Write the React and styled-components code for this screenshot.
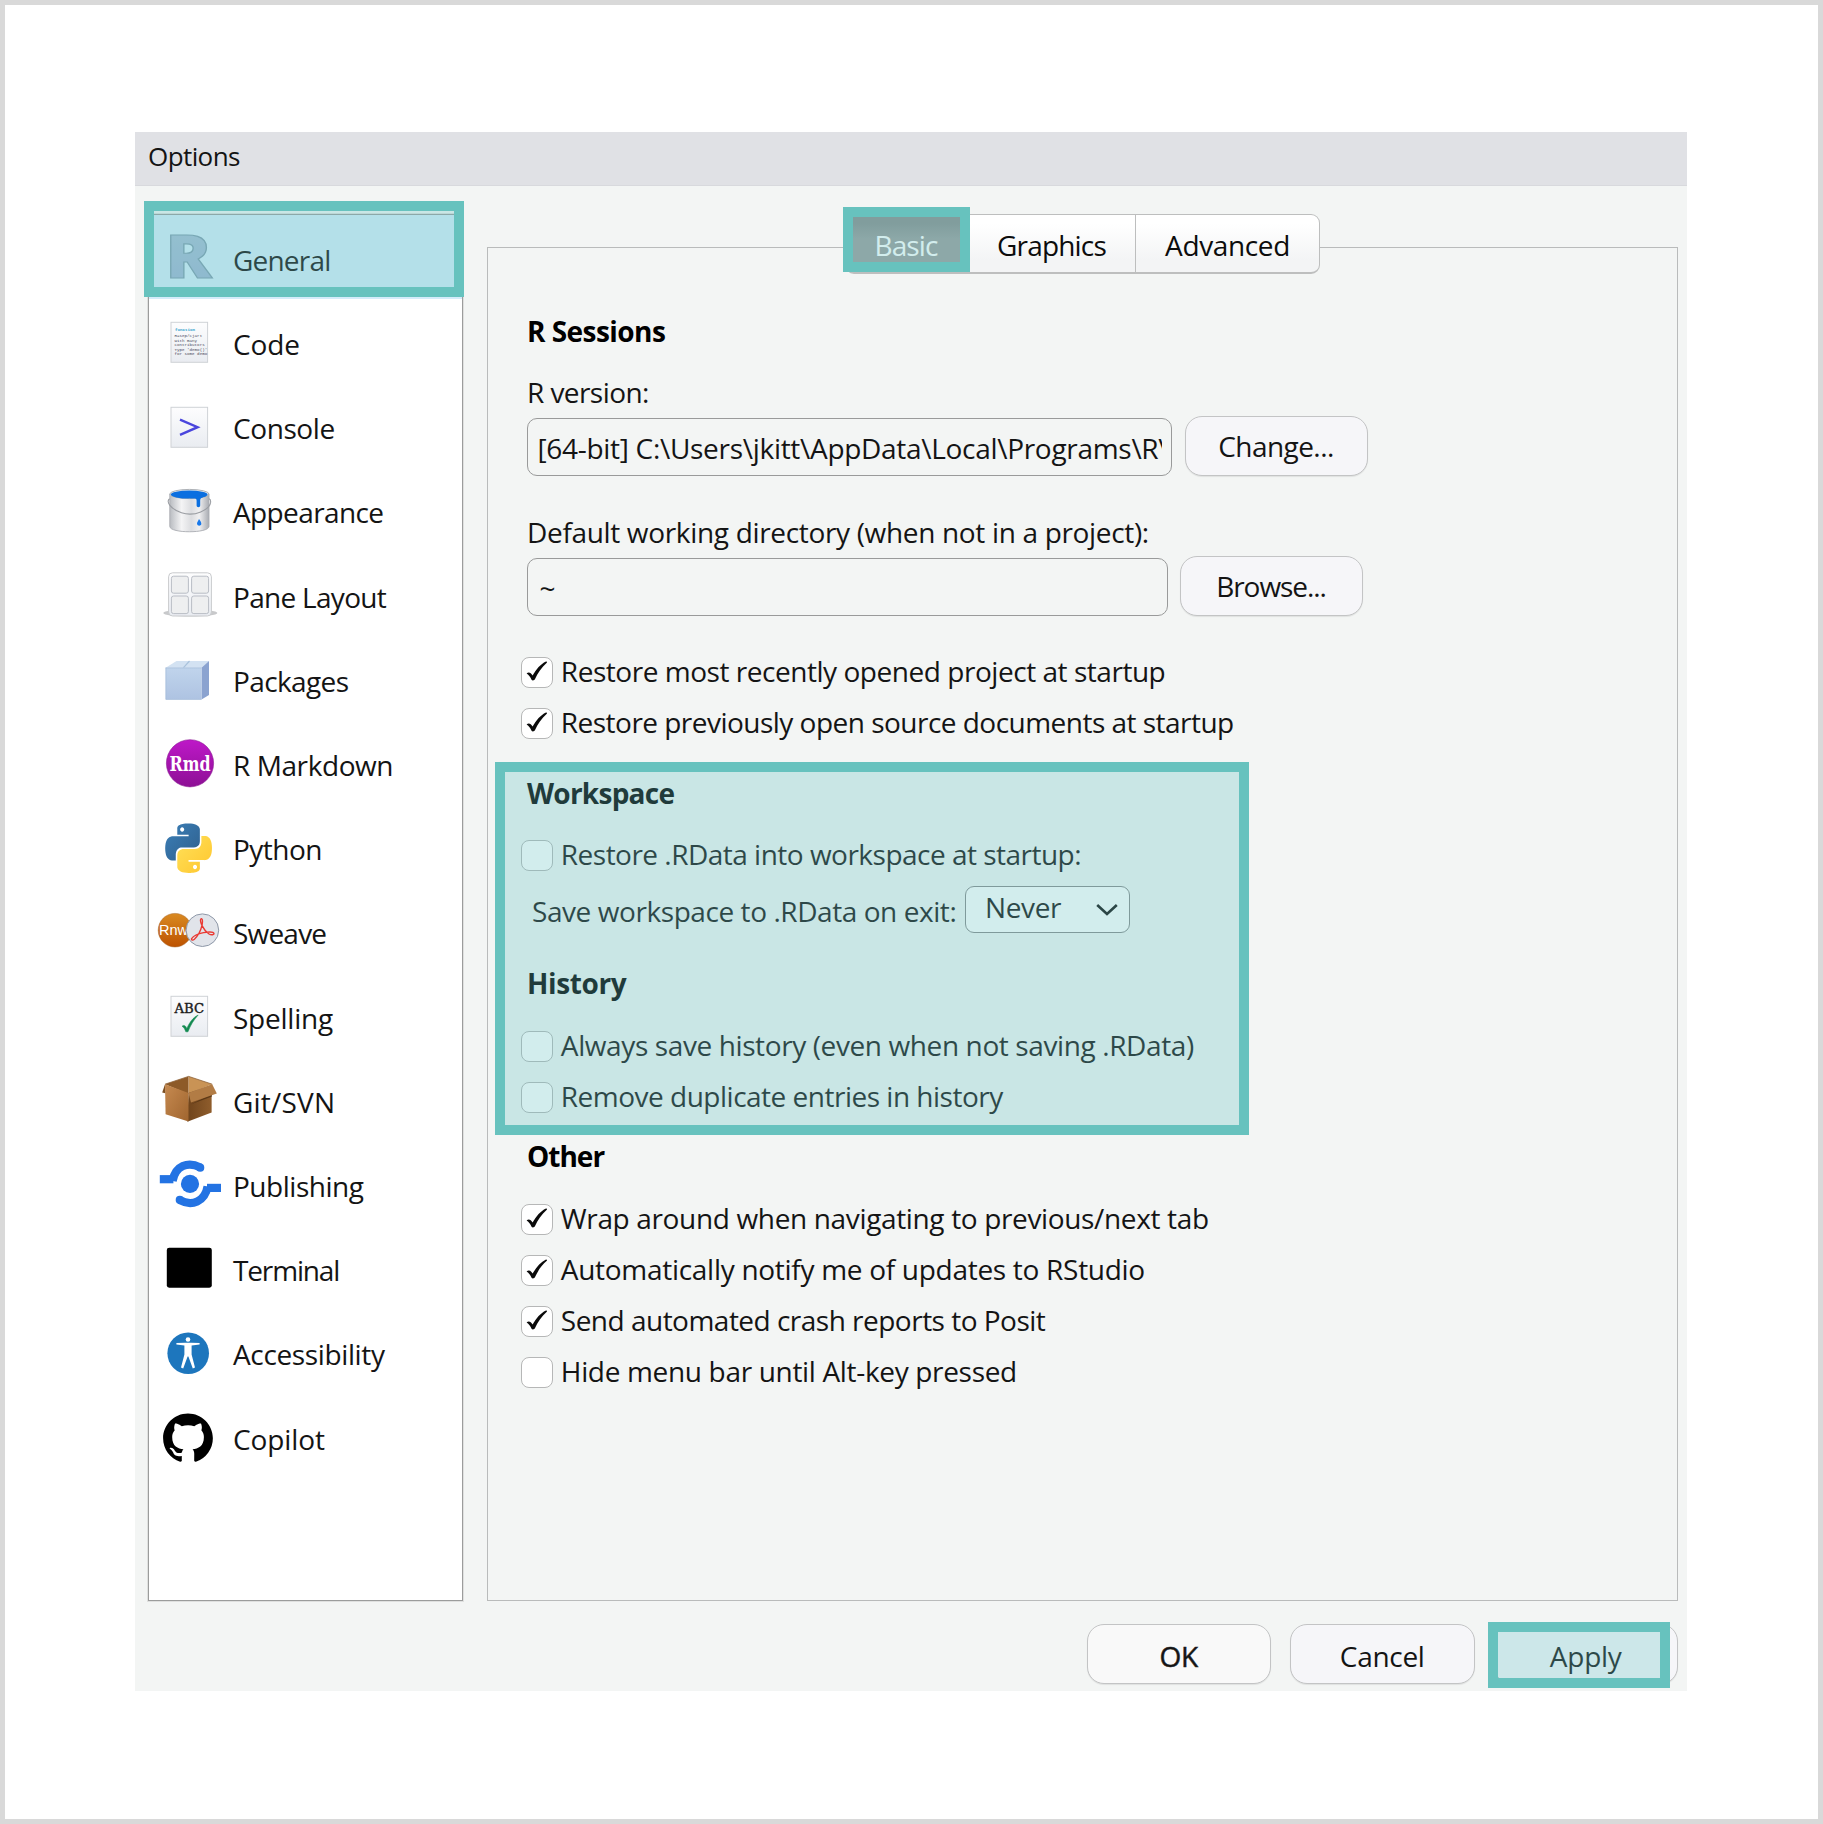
import React from "react";
import styled, { createGlobalStyle, css } from "styled-components";

const GlobalStyle = createGlobalStyle`
  *, *::before, *::after { box-sizing: border-box; }
  body { margin: 0; background: #fff; }
`;

const Page = styled.div`
  width: 1823px;
  height: 1824px;
  padding: 127px 131px 0 130px;
  border: 5px solid #d9d9d9;
  background: #fff;
  color: #141414;
  font: 400 28px/38px "Open Sans", "Noto Sans", sans-serif;
  overflow: hidden;
  white-space: pre;
`;

const Dialog = styled.section`
  position: relative;
  width: 1552px;
  height: 1559px;
  background: #f3f5f4;
`;

const TitleBar = styled.header`
  height: 54px;
  padding: 6px 13px;
  border-bottom: 1px solid #d8d9dd;
  background: #e0e1e5;
  font-size: 26px;
  line-height: 36px;
  letter-spacing: -0.59px;
`;

const Body = styled.div`
  display: flex;
  gap: 24px;
  height: 1416px;
  padding: 28px 9px 0 13px;
`;

const Sidebar = styled.nav`
  flex: 0 0 315px;
  height: 1387px;
  border: 1px solid #9b9c9c;
  border-right-width: 1.5px;
  background: #fff;
  outline: 1px solid rgba(120, 120, 120, 0.16);
`;

const NavItem = styled.div`
  display: flex;
  height: 84.19px;
  padding: 11.2px 0 0 8px;
  background: ${(p) => (p.$selected ? "#d4ecfa" : "transparent")};
  svg {
    flex: 0 0 64px;
    width: 64px;
    height: 64px;
    overflow: visible;
  }
`;

const NavLabel = styled.span`
  margin: 14.7px 0 0 12px;
  letter-spacing: ${(p) => p.$track}px;
`;

const Main = styled.main`
  flex: 1;
  display: flex;
  flex-direction: column;
`;

const TabBar = styled.div`
  z-index: 1;
  align-self: center;
  display: flex;
  height: 60px;
  border: 1px solid #bdbebe;
  border-bottom-width: 2px;
  border-radius: 9px;
  background: linear-gradient(#fff 15%, #f3f4f5 80%);
  overflow: hidden;
`;

const Tab = styled.button`
  width: ${(p) => p.$width}px;
  padding: 2px ${(p) => p.$shift || 0}px 0 0;
  border: 0;
  border-left: ${(p) => (p.$active ? "0" : "1px solid #bdbebe")};
  background: ${(p) => (p.$active ? "linear-gradient(#8b8d8d 8px, #9c9d9d 24px)" : "transparent")};
  color: ${(p) => (p.$active ? "#fff" : "#0c0c0c")};
  font: inherit;
  letter-spacing: ${(p) => p.$track}px;
`;

const Panel = styled.div`
  height: 1354px;
  margin-top: -27px;
  padding: 63px 0 0 34px;
  border: 1px solid #b9bbbb;
`;

const Group = styled.section`
  margin-top: ${(p) => p.$top || 0}px;
`;

const Heading = styled.h2`
  height: 38px;
  margin: 0 0 ${(p) => p.$gap}px 5px;
  color: #000;
  font-size: 28px;
  font-weight: 700;
  line-height: 40px;
  letter-spacing: ${(p) => p.$track}px;
`;

const FieldLabel = styled.label`
  display: block;
  margin: ${(p) => p.$top || 0}px 0 0 5px;
  letter-spacing: ${(p) => p.$track}px;
`;

const FieldRow = styled.div`
  display: flex;
  align-items: flex-end;
  gap: ${(p) => p.$gap}px;
  height: 60px;
  margin: ${(p) => p.$top}px 0 0 4.5px;
`;

const Field = styled.div`
  width: ${(p) => p.$width}px;
  height: 58px;
  padding: 10px 9px 8px ${(p) => p.$inset || 10}px;
  border: 1.5px solid #999a9a;
  border-radius: 10px;
  letter-spacing: ${(p) => p.$track || 0}px;
`;

const FieldValue = styled.div`
  overflow: hidden;
`;

const Button = styled.button`
  width: ${(p) => p.$width}px;
  height: 60px;
  padding: ${(p) => (p.$footer ? "3px 0 0" : "0 0 1px")};
  border: 1.5px solid #c3c4c5;
  border-radius: 17px;
  background: ${(p) => (p.$primary ? "#f9f9f9" : "#f6f6f9")};
  box-shadow: 0 1px 1px rgba(0, 0, 0, 0.08);
  color: #141414;
  font: inherit;
  letter-spacing: ${(p) => p.$track}px;
  ${(p) => p.$primary && css`-webkit-text-stroke: 0.5px #222;`}
`;

const CheckRow = styled.label`
  display: flex;
  align-items: flex-start;
  gap: 7.5px;
  height: 38px;
  margin-left: -0.7px;
  letter-spacing: ${(p) => p.$track}px;
  & + & { margin-top: 13px; }
`;

const CheckBox = styled.span`
  flex: 0 0 32px;
  height: 31px;
  margin-top: 5px;
  border: 1.5px solid #b6b7b7;
  border-radius: 8px;
  background: #fff;
  svg { display: block; }
`;

const SaveRow = styled.div`
  display: flex;
  gap: 9px;
  height: 47px;
  margin: 13px 0 0 10px;
`;

const SaveLabel = styled.span`
  width: 424px;
  padding-top: 6px;
  letter-spacing: -0.43px;
`;

const Select = styled.div`
  display: flex;
  justify-content: space-between;
  width: 165px;
  height: 47px;
  padding: 1px 11px 0 19px;
  border: 1.5px solid #88898a;
  border-radius: 9px;
  background: #fff;
  letter-spacing: -0.38px;
  svg { margin-top: 15px; }
`;

const Footer = styled.footer`
  display: flex;
  justify-content: flex-end;
  gap: 19px;
  padding: 22px 9px 0 0;
`;

/* Teal marker box drawn over a part of the dialog. */
const Highlight = styled.div`
  position: absolute;
  left: ${(p) => p.$x}px;
  top: ${(p) => p.$y}px;
  width: ${(p) => p.$w}px;
  height: ${(p) => p.$h}px;
  z-index: 2;
  border: 10px solid #67c2be;
  background: rgba(105, 194, 194, 0.3);
  background-clip: padding-box;
  pointer-events: none;
`;

const Svg = ({ children }) => (
  <svg viewBox="0 0 64 64" fill="none">{children}</svg>
);

const Sheet = () => (
  <rect x="14" y="12.3" width="36.6" height="40" fill="url(#sheet)" stroke="#cfd2d6" />
);

const icons = {
  general: (
    <Svg>
      <defs>
        <linearGradient id="rFill" x1="0" y1="0" x2="0" y2="1">
          <stop offset="0" stopColor="#a9c2d6" />
          <stop offset="1" stopColor="#9db2d3" />
        </linearGradient>
        <linearGradient id="sheet" x1="0" y1="0" x2="0" y2="1">
          <stop offset="0" stopColor="#fdfdfe" />
          <stop offset="1" stopColor="#e9ecf1" />
        </linearGradient>
      </defs>
      <text x="8.6" y="52.4" fontFamily="Open Sans" fontWeight="800" fontSize="60.5" textLength="46" lengthAdjust="spacingAndGlyphs" fill="url(#rFill)" stroke="#7f9cae" strokeWidth="1.2">R</text>
    </Svg>
  ),
  code: (
    <Svg>
      <Sheet />
      <g fontFamily="Liberation Mono" fontSize="4.2" fill="#4a4a5c">
        <text x="18" y="20.6" fontWeight="700" fill="#2a9ccb">function</text>
        <text x="17.5" y="27.4">R=sep/cjart</text>
        <text x="17.5" y="31.9">with many</text>
        <text x="17.5" y="36.3">contributors</text>
        <text x="17.5" y="40.7">Type 'demo()'</text>
        <text x="17.5" y="45.1">for some demo</text>
      </g>
    </Svg>
  ),
  console: (
    <Svg>
      <Sheet />
      <path d="M23 24.6L40.6 32.2L23 39.8" stroke="#4a45dd" strokeWidth="2.4" />
    </Svg>
  ),
  appearance: (
    <Svg>
      <defs>
        <linearGradient id="can" x1="0" y1="0" x2="1" y2="0">
          <stop offset="0" stopColor="#b9bcc1" />
          <stop offset="0.3" stopColor="#f4f4f5" />
          <stop offset="0.55" stopColor="#dcdde0" />
          <stop offset="0.75" stopColor="#f0f0f1" />
          <stop offset="1" stopColor="#a9acb2" />
        </linearGradient>
      </defs>
      <path d="M12.8 15V47.5C13 54.5 51.6 54.5 52 47.5V15Z" fill="url(#can)" stroke="#aaadb2" strokeWidth="0.9" />
      <ellipse cx="32.4" cy="15" rx="19.6" ry="4.6" fill="#e8eaec" stroke="#a5a9af" strokeWidth="0.9" />
      <ellipse cx="32.2" cy="15.6" rx="18.4" ry="4" fill="#0b6fe0" />
      <path d="M36 16.5H50C46 18.5 43.4 18 43.2 21.5V26.5C43.2 28.8 39.6 28.8 39.6 26.5V21.5C39.4 19 38 18.6 36 18.4Z" fill="#0b6fe0" />
      <path d="M42 40C43.5 42 44.6 43.4 44.3 45.2C43.6 47.4 40.3 47 40 44.8C40 43 41.3 42 42 40Z" fill="#1878ea" />
      <path d="M12.6 19.8C8.5 22.4 13.5 30 24.5 33.8C38 38.2 52.5 30.6 53.6 23.4C53.8 21.2 53 20 52 19.8" stroke="#9a9da2" strokeWidth="1.1" />
    </Svg>
  ),
  pane: (
    <Svg>
      <ellipse cx="33.3" cy="50" rx="27" ry="3.6" fill="#b5b7b9" opacity="0.75" />
      <rect x="11.6" y="9.8" width="42.8" height="43.2" rx="4" fill="url(#sheet)" stroke="#c9cbcd" strokeWidth="1" />
      <g fill="#eeeff0" stroke="#b9bdc5" strokeWidth="1">
        <rect x="14.4" y="13.2" width="17" height="17" rx="2.2" />
        <rect x="34.6" y="13.2" width="17" height="17" rx="2.2" />
        <rect x="14.4" y="33" width="17" height="17.6" rx="2.2" />
        <rect x="34.6" y="33" width="17" height="17.6" rx="2.2" />
      </g>
    </Svg>
  ),
  packages: (
    <Svg>
      <defs>
        <linearGradient id="pkgFront" x1="0" y1="0" x2="0" y2="1">
          <stop offset="0" stopColor="#c0d4ec" />
          <stop offset="1" stopColor="#aec3e2" />
        </linearGradient>
      </defs>
      <path d="M8.7 20.7L19.5 14H52L44.5 20.7Z" fill="#d3e2f2" />
      <path d="M26.5 20.7L32.5 14" stroke="#a9c2dc" strokeWidth="1.2" />
      <path d="M44.5 20.7L52 14V48L44.5 52.5Z" fill="#8ba3d0" />
      <path d="M8.7 20.7H44.5V52.6H8.7Z" fill="url(#pkgFront)" />
      <path d="M8.7 20.9H44.5M8.9 20.7V52.4H44.5" stroke="#a3bad8" strokeWidth="0.7" />
    </Svg>
  ),
  rmarkdown: (
    <Svg>
      <defs>
        <linearGradient id="rmd" x1="0" y1="0" x2="0" y2="1">
          <stop offset="0" stopColor="#be18c8" />
          <stop offset="1" stopColor="#8d1095" />
        </linearGradient>
      </defs>
      <circle cx="33" cy="32.3" r="23.6" fill="url(#rmd)" stroke="#8c1c94" strokeWidth="0.6" />
      <text x="12.6" y="39.6" fontFamily="DejaVu Serif" fontWeight="700" fontSize="20.5" textLength="41" lengthAdjust="spacingAndGlyphs" fill="#fff">Rmd</text>
    </Svg>
  ),
  python: (
    <Svg>
      <defs>
        <linearGradient id="pyBlue" x1="0" y1="0" x2="1" y2="1">
          <stop offset="0" stopColor="#3b7fb8" />
          <stop offset="1" stopColor="#2f5f8c" />
        </linearGradient>
        <linearGradient id="pyYellow" x1="0" y1="0" x2="1" y2="1">
          <stop offset="0" stopColor="#ffe15a" />
          <stop offset="1" stopColor="#ffc62e" />
        </linearGradient>
      </defs>
      <g transform="translate(8.3 7.5) scale(1.94 2.06)">
        <path fill="url(#pyBlue)" d="M14.25.18l.9.2.73.26.59.3.45.32.34.34.25.34.16.33.1.3.04.26.02.2-.01.13V8.5l-.05.63-.13.55-.21.46-.26.38-.3.31-.33.25-.35.19-.35.14-.33.1-.3.07-.26.04-.21.02H8.77l-.69.05-.59.14-.5.22-.41.27-.33.32-.27.35-.2.36-.15.37-.1.35-.07.32-.04.27-.02.21v3.06H3.17l-.21-.03-.28-.07-.32-.12-.35-.18-.36-.26-.36-.36-.35-.46-.32-.59-.28-.73-.21-.88-.14-1.05-.05-1.23.06-1.22.16-1.04.24-.87.32-.71.36-.57.4-.44.42-.33.42-.24.4-.16.36-.1.32-.05.24-.01h.16l.06.01h8.16v-.83H6.18l-.01-2.75-.02-.37.05-.34.11-.31.17-.28.25-.26.31-.23.38-.2.44-.18.51-.15.58-.12.64-.1.71-.06.77-.04.84-.02 1.27.05zm-6.3 1.98l-.23.33-.08.41.08.41.23.34.33.22.41.09.41-.09.33-.22.23-.34.08-.41-.08-.41-.23-.33-.33-.22-.41-.09-.41.09z" />
        <path fill="url(#pyYellow)" d="M21.04 6.11l.28.06.32.12.35.18.36.27.36.35.35.47.32.59.28.73.21.88.14 1.04.05 1.23-.06 1.23-.16 1.04-.24.86-.32.71-.36.57-.4.45-.42.33-.42.24-.4.16-.36.09-.32.05-.24.02-.16-.01h-8.22v.82h5.84l.01 2.76.02.36-.05.34-.11.31-.17.29-.25.25-.31.24-.38.2-.44.17-.51.15-.58.13-.64.09-.71.07-.77.04-.84.01-1.27-.04-1.07-.14-.9-.2-.73-.25-.59-.3-.45-.33-.34-.34-.25-.34-.16-.33-.1-.3-.04-.25-.02-.2.01-.13v-5.34l.05-.64.13-.54.21-.46.26-.38.3-.32.33-.24.35-.2.35-.14.33-.1.3-.06.26-.04.21-.02.13-.01h5.84l.69-.05.59-.14.5-.21.41-.28.33-.32.27-.35.2-.36.15-.36.1-.35.07-.32.04-.28.02-.21V6.07h2.09l.14.01zm-6.47 14.25l-.23.33-.08.41.08.41.23.33.33.23.41.08.41-.08.33-.23.23-.33.08-.41-.08-.41-.23-.33-.33-.23-.41-.08-.41.08z" />
      </g>
    </Svg>
  ),
  sweave: (
    <Svg>
      <defs>
        <linearGradient id="rnw" x1="0" y1="0" x2="0" y2="1">
          <stop offset="0" stopColor="#d98a22" />
          <stop offset="1" stopColor="#bd5200" />
        </linearGradient>
      </defs>
      <circle cx="18" cy="30.2" r="16.8" fill="url(#rnw)" stroke="#a8672a" strokeWidth="0.5" />
      <text x="2" y="34.6" fontFamily="Liberation Sans" fontSize="13.8" textLength="29" lengthAdjust="spacingAndGlyphs" fill="#fff">Rnw</text>
      <circle cx="45.4" cy="30.2" r="16.3" fill="#e1e4ea" stroke="#8e98a8" strokeWidth="1" />
      <path d="M44.6 18.6C42.8 18.8 43.4 22.4 45 25.6C46.4 28.4 49.2 32 52 34C54.4 35.4 57.2 34.8 57 33.4C56.6 31.8 51 31.8 46.6 32.6C42 33.5 36.4 36 34.6 38.6C34 40 35.6 40.8 37.4 39.2C40.6 36.2 44 29.6 45 25.4C45.5 22.6 45.9 18.8 44.6 18.6Z" stroke="#ea3a33" strokeWidth="1.4" />
    </Svg>
  ),
  spelling: (
    <Svg>
      <Sheet />
      <text x="17.4" y="28.6" fontFamily="DejaVu Serif" fontSize="13.4" textLength="29.6" lengthAdjust="spacingAndGlyphs" fill="#1c1c1c" stroke="#1c1c1c" strokeWidth="0.4">ABC</text>
      <path d="M25 42.2C27 40.6 28.6 41.6 29.8 44.4C32.4 38.6 36 33.4 41.2 31C36.6 36.2 33.6 41 31 47.8H28.8C28 45.4 27 43.4 25 42.2Z" fill="#138a50" stroke="#138a50" strokeWidth="0.5" />
    </Svg>
  ),
  git: (
    <Svg>
      <defs>
        <linearGradient id="boxLeft" x1="0" y1="0" x2="1" y2="1">
          <stop offset="0" stopColor="#c68a50" />
          <stop offset="1" stopColor="#a0652f" />
        </linearGradient>
        <linearGradient id="boxRight" x1="0" y1="0" x2="1" y2="0">
          <stop offset="0" stopColor="#6f441c" />
          <stop offset="1" stopColor="#8f5d2c" />
        </linearGradient>
      </defs>
      <path d="M8 16.2L31.6 8.4V25.4L30 25.4Z" fill="#8d5a28" />
      <path d="M31.6 8.4L55.2 16.2L31.6 25.4Z" fill="#c99355" />
      <path d="M31.5 25L54.6 17V44.6L30.3 53.8Z" fill="url(#boxRight)" />
      <path d="M8 16.2L31.5 25V53.6L8.6 46.2Z" fill="url(#boxLeft)" />
      <path d="M8 16.2L5.2 24.4L8.2 25.2Z" fill="#7d4f22" />
      <path d="M34 36.2L55 28.6V26Z" fill="#4a2c10" opacity="0.7" />
      <path d="M31.5 25L55.2 16.2L59.8 25.4L34 34.4Z" fill="#b27c45" />
      <path d="M8 16.2L31.6 8.4L55.2 16.2" stroke="#8a5c30" strokeWidth="0.8" />
    </Svg>
  ),
  publishing: (
    <Svg>
      <circle cx="33" cy="31.9" r="9.1" fill="#2373e3" />
      <g stroke="#2373e3" strokeWidth="8.2">
        <path d="M2.8 27.2H16.4" />
        <path d="M15.6 29C18.4 13.6 31 9.2 43.2 15.4" />
        <path d="M64 35.9H50" />
        <path d="M50.6 34.4C48 49.8 34.8 54.6 22.8 48.2" />
      </g>
      <circle cx="43.2" cy="15.7" r="4.1" fill="#2373e3" />
      <circle cx="22.8" cy="47.9" r="4.1" fill="#2373e3" />
    </Svg>
  ),
  terminal: (
    <Svg>
      <rect x="9.8" y="11.7" width="45" height="40" rx="2.4" fill="#000" />
    </Svg>
  ),
  accessibility: (
    <Svg>
      <circle cx="31.2" cy="32.2" r="20.8" fill="#1d76bd" />
      <circle cx="31" cy="18.5" r="2.3" fill="#fff" />
      <path d="M19.4 22L28 21.7H34L42.6 22V23.5L34.6 24.4V33.4L38 46.6L35.8 47.4L31.4 35.4H30.6L26.2 47.4L24 46.6L27.4 33.4V24.4L19.4 23.5Z" fill="#fff" />
    </Svg>
  ),
  copilot: (
    <Svg>
      <path
        transform="translate(6.1 8.4) scale(3.11 3.1)"
        fill="#000"
        d="M8 0C3.58 0 0 3.58 0 8c0 3.54 2.29 6.53 5.47 7.59.4.07.55-.17.55-.38 0-.19-.01-.82-.01-1.49-2.01.37-2.53-.49-2.69-.94-.09-.23-.48-.94-.82-1.13-.28-.15-.68-.52-.01-.53.63-.01 1.08.58 1.23.82.72 1.21 1.87.87 2.33.66.07-.52.28-.87.51-1.07-1.78-.2-3.64-.89-3.64-3.95 0-.87.31-1.59.82-2.15-.08-.2-.36-1.02.08-2.12 0 0 .67-.21 2.2.82.64-.18 1.32-.27 2-.27.68 0 1.36.09 2 .27 1.53-1.04 2.2-.82 2.2-.82.44 1.1.16 1.92.08 2.12.51.56.82 1.27.82 2.15 0 3.07-1.87 3.75-3.65 3.95.29.25.54.73.54 1.48 0 1.07-.01 1.93-.01 2.2 0 .21.15.46.55.38A8.013 8.013 0 0016 8c0-4.42-3.58-8-8-8z"
      />
    </Svg>
  ),
};

const navItems = [
  ["general", "General", -0.8],
  ["code", "Code", -0.15],
  ["console", "Console", -0.42],
  ["appearance", "Appearance", -0.62],
  ["pane", "Pane Layout", -0.7],
  ["packages", "Packages", -0.62],
  ["rmarkdown", "R Markdown", -0.42],
  ["python", "Python", -0.5],
  ["sweave", "Sweave", -0.8],
  ["spelling", "Spelling", -0.23],
  ["git", "Git/SVN", 0.2],
  ["publishing", "Publishing", -0.47],
  ["terminal", "Terminal", -1.15],
  ["accessibility", "Accessibility", -0.37],
  ["copilot", "Copilot", -0.1],
];

const Check = ({ checked, track, children }) => (
  <CheckRow $track={track}>
    <CheckBox>
      {checked && (
        <svg width="29" height="28" viewBox="0 0 29 28">
          <path d="M4.6 15.4C6.6 13.9 8.8 14.4 10.6 17.6C14.4 11.2 18.4 6.2 24 3.6C24.6 3.4 25.4 4.2 24.8 4.8C19.4 9.4 15.8 15 12.8 21.6C12.2 22.6 10 22.8 9.4 21.6C8.4 19 7 17 4.6 15.4Z" fill="#0a0a0a" />
        </svg>
      )}
    </CheckBox>
    {children}
  </CheckRow>
);

export default function App() {
  return (
    <Page>
      <GlobalStyle />
      <Dialog>
        <TitleBar>Options</TitleBar>
        <Body>
          <Sidebar>
            {navItems.map(([id, label, track], i) => (
              <NavItem key={id} $selected={i === 0}>
                {icons[id]}
                <NavLabel $track={track}>{label}</NavLabel>
              </NavItem>
            ))}
          </Sidebar>
          <Main>
            <TabBar>
              <Tab $active $width={123} $shift={3} $track={-0.86}>Basic</Tab>
              <Tab $width={166} $shift={2} $track={-0.81}>Graphics</Tab>
              <Tab $width={184} $track={-0.38}>Advanced</Tab>
            </TabBar>
            <Panel>
              <Group>
                <Heading $gap={24} $track={-0.55}>R Sessions</Heading>
                <FieldLabel $track={-0.57}>R version:</FieldLabel>
                <FieldRow $top={5} $gap={13}>
                  <Field $width={645} $track={-0.3}>
                    <FieldValue>{"[64-bit] C:\\Users\\jkitt\\AppData\\Local\\Programs\\R\\"}</FieldValue>
                  </Field>
                  <Button $width={183} $track={-0.57}>Change...</Button>
                </FieldRow>
                <FieldLabel $top={37} $track={-0.33}>Default working directory (when not in a project):</FieldLabel>
                <FieldRow $top={5} $gap={12}>
                  <Field $width={641} $inset={12}>
                    <FieldValue>~</FieldValue>
                  </Field>
                  <Button $width={183} $track={-1.08}>Browse...</Button>
                </FieldRow>
              </Group>
              <Group $top={36}>
                <Check checked track={-0.46}>Restore most recently opened project at startup</Check>
                <Check checked track={-0.52}>Restore previously open source documents at startup</Check>
              </Group>
              <Group $top={32}>
                <Heading $gap={24} $track={-0.75}>Workspace</Heading>
                <Check track={-0.51}>Restore .RData into workspace at startup:</Check>
                <SaveRow>
                  <SaveLabel>Save workspace to .RData on exit:</SaveLabel>
                  <Select>
                    Never
                    <svg width="22" height="14" viewBox="0 0 22 14" fill="none">
                      <path d="M1.2 2L11 11L20.8 2" stroke="#111" strokeWidth="2.6" />
                    </svg>
                  </Select>
                </SaveRow>
              </Group>
              <Group $top={30}>
                <Heading $gap={25} $track={-0.4}>History</Heading>
                <Check track={-0.39}>Always save history (even when not saving .RData)</Check>
                <Check track={-0.5}>Remove duplicate entries in history</Check>
              </Group>
              <Group $top={21}>
                <Heading $gap={25} $track={-1}>Other</Heading>
                <Check checked track={-0.35}>Wrap around when navigating to previous/next tab</Check>
                <Check checked track={-0.29}>Automatically notify me of updates to RStudio</Check>
                <Check checked track={-0.51}>Send automated crash reports to Posit</Check>
                <Check track={-0.33}>Hide menu bar until Alt-key pressed</Check>
              </Group>
            </Panel>
          </Main>
        </Body>
        <Footer>
          <Button $footer $primary $width={184.5} $track={-0.28}>OK</Button>
          <Button $footer $width={184.5} $track={-0.3}>Cancel</Button>
          <Button $footer $width={184.5} $track={-0.26}>Apply</Button>
        </Footer>
        <Highlight $x={9} $y={69} $w={320} $h={96} />
        <Highlight $x={708} $y={75} $w={127} $h={65} />
        <Highlight $x={360} $y={630} $w={754} $h={373} />
        <Highlight $x={1353} $y={1490} $w={182} $h={66} />
      </Dialog>
    </Page>
  );
}
